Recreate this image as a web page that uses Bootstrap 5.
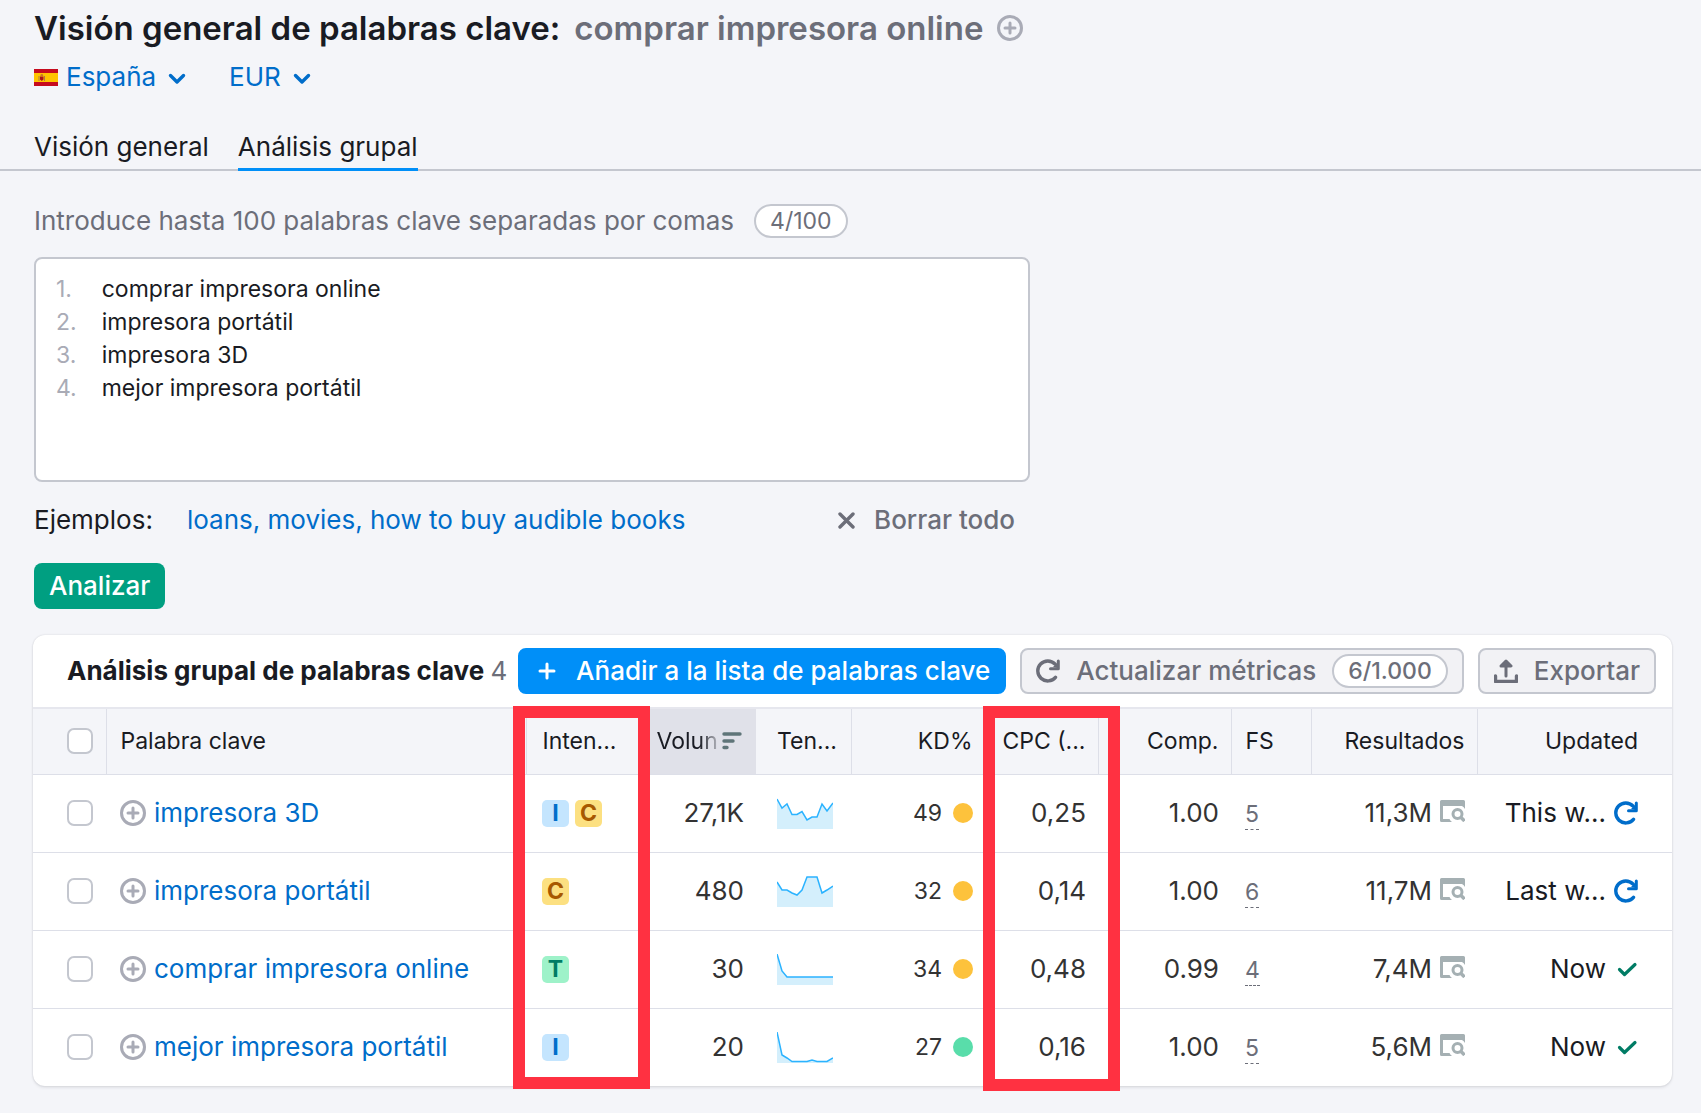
<!DOCTYPE html>
<html lang="es">
<head>
<meta charset="utf-8">
<meta name="viewport" content="width=device-width, initial-scale=1">
<title>Visión general de palabras clave</title>
<link href="https://cdn.jsdelivr.net/npm/bootstrap@5.3.0/dist/css/bootstrap.min.css" rel="stylesheet">
<style>
  :root { --ink:#191b23; --ink-soft:#6c6e79; --line:#c4c7cf; --rule:#dddfe8; --link:#006dca; --blue:#008ff8; --page:#f4f5f9; --alert:#ff3141; }
  body { font-family:Inter, "Liberation Sans", sans-serif; font-size:26px; line-height:32px; color:var(--ink); background:var(--page); padding-bottom:24px; }
  a { color:var(--link); text-decoration:none; }
  svg { display:block; flex:none; }
  .page-pad { padding-left:34px; padding-right:29px; }
  .page-title { font-size:33px; line-height:40px; font-weight:600; padding-top:8px; gap:14px; }
  .page-title .query { color:var(--ink-soft); }
  .plain-btn { background:none; border:0; padding:0; color:inherit; }
  .pickers { gap:43px; padding-top:13px; }
  .pickers .plain-btn { color:var(--link); gap:8px; }
  .tabs { gap:29px; margin-top:38px; border-bottom:2px solid var(--line); }
  .tabs a { color:var(--ink); padding-bottom:5px; margin-bottom:-2px; border-bottom:3px solid transparent; }
  .tabs a.active { border-color:var(--blue); }
  .hint { color:var(--ink-soft); gap:20px; margin-top:33px; }
  .counter { border:2px solid var(--line); border-radius:17px; background:#fff; color:var(--ink-soft); font-size:23px; line-height:30px; padding:0 14px; }
  .entry { max-width:996px; }
  .kw-box { border:2px solid var(--line); border-radius:8px; background:#fff; height:225px; margin-top:19px; padding:14px 20px; gap:25px; font-size:23px; line-height:33px; }
  .kw-box .line-nos { color:#a9abb6; }
  .kw-box textarea { border:0; padding:0; outline:0; resize:none; color:var(--ink); background:none; }
  .examples { margin-top:22px; padding-right:15px; }
  .examples a { margin-left:34px; }
  .clear-btn { color:var(--ink-soft); font-weight:500; gap:19px; }
  .btn-run { background:#009f81; color:#fff; font-size:26px; line-height:32px; font-weight:500; border:0; border-radius:8px; padding:7px 15px; margin-top:27px; }
  .report { background:#fff; border-radius:12px; box-shadow:0 0 2px rgba(25,27,35,.16), 0 2px 3px rgba(25,27,35,.08); margin:26px 0 0 -1px; }
  .report-head { height:72px; padding:0 16px 0 34px; }
  .report-head h2 { font-size:26px; line-height:32px; font-weight:700; margin:0; }
  .report-head .total { color:var(--ink-soft); font-weight:400; }
  .tool-set { gap:14px; }
  .tool-btn { height:46px; border-radius:8px; font-size:26px; line-height:32px; font-weight:500; border:2px solid var(--line); background:#f2f2f5; color:var(--ink-soft); padding:0 14px; gap:16px; white-space:nowrap; }
  .tool-btn.primary { background:var(--blue); border-color:var(--blue); color:#fff; }
  .kw-table { table-layout:fixed; width:100%; }
  .kw-table th { font-size:23px; font-weight:400; height:66px; background:var(--page); border-top:2px solid #e6e7ee; border-bottom:1px solid var(--rule); border-right:1px solid var(--rule); padding:0 12px 0 14px; white-space:nowrap; }
  .kw-table th:last-child { border-right:0; }
  .kw-table td { height:78px; border-bottom:1px solid var(--rule); padding:0 12px 0 14px; white-space:nowrap; color:#333; }
  .kw-table tr:last-child td { border-bottom:0; }
  .kw-table .pick { padding-left:34px; }
  .kw-table .aim { padding-left:16px; }
  .kw-table .trend { padding-left:21px; }
  .kw-table .last { padding-right:34px; color:var(--ink); }
  .kw-table .sorted { background:#e0e1e9; border-right:0; }
  .fade-text { -webkit-mask-image:linear-gradient(90deg,#000 70%,rgba(0,0,0,.2)); mask-image:linear-gradient(90deg,#000 70%,rgba(0,0,0,.2)); }
  .form-check-input.sq { display:block; width:26px; height:26px; margin:0; border:2px solid var(--line); border-radius:7px; background-color:#fff; }
  .intent { width:27px; height:27px; border-radius:5px; font-size:23px; line-height:27px; font-weight:700; text-align:center; }
  .intent.i { background:#c4e5fe; color:#006dca; }
  .intent.c { background:#fce081; color:#a75800; }
  .intent.t { background:#9ef2c9; color:#007c65; }
  .intents { gap:6px; }
  .kd { font-size:23px; gap:11px; }
  .kd-dot { width:20px; height:20px; border-radius:50%; background:#fdc23c; }
  .kd-dot.easy { background:#59ddaa; }
  .fs { font-size:23px; line-height:30px; color:var(--ink-soft); display:inline-block; border-bottom:1px dashed var(--ink-soft); }
  /* marker frames drawn over two columns */
  .frame { position:absolute; z-index:2; top:71px; width:137px; border:12px solid var(--alert); pointer-events:none; }
  .frame.one { right:1022px; bottom:-3px; }
  .frame.two { right:552px; bottom:-5px; }
</style>
<script src="https://cdn.jsdelivr.net/npm/bootstrap@5.3.0/dist/js/bootstrap.bundle.min.js"></script>
</head>
<body>
<svg width="0" height="0" class="position-absolute" aria-hidden="true">
  <symbol id="plus-circle" viewBox="0 0 26 26"><circle cx="13" cy="13" r="11.5" fill="none" stroke="#a9abb6" stroke-width="3"/><path d="M13 8v10M8 13h10" stroke="#a9abb6" stroke-width="3" stroke-linecap="round"/></symbol>
  <symbol id="chev" viewBox="0 0 18 12"><path d="M2.5 2.5 9 9l6.500-6.500" fill="none" stroke="currentColor" stroke-width="3.400" stroke-linecap="round" stroke-linejoin="round"/></symbol>
  <symbol id="reload" viewBox="0 0 24 24"><path d="M19.500 18.300A10 10 0 1 1 19 5" fill="none" stroke="currentColor" stroke-width="3.400" stroke-linecap="round"/><path d="M22.300 2v7.800h-7.800" fill="none" stroke="currentColor" stroke-width="3" stroke-linecap="round" stroke-linejoin="round"/><path d="m17 8 5-5v6z" fill="currentColor"/></symbol>
  <symbol id="tick" viewBox="0 0 24 24"><path d="m5.500 12.500 5 5L21 7.500" fill="none" stroke="#007c65" stroke-width="3.200" stroke-linecap="round" stroke-linejoin="round"/></symbol>
  <symbol id="serp" viewBox="0 0 25 22"><path d="M1.500 0h22A1.500 1.500 0 0 1 25 1.500V9a8 8 0 0 0-3-3H3v13h6.500a8 8 0 0 0 2.500 3H1.500A1.500 1.500 0 0 1 0 20.500v-19A1.500 1.500 0 0 1 1.500 0z" fill="#a5b0b3"/><circle cx="17.500" cy="14" r="4.500" fill="none" stroke="#a5b0b3" stroke-width="3"/><path d="m20.500 17 4 4" stroke="#a5b0b3" stroke-width="3.400"/></symbol>
</svg>

<header>
  <div class="page-pad">
    <h1 class="page-title d-flex align-items-center m-0"><span>Visión general de palabras clave:</span><span class="query">comprar impresora online</span>
      <button class="plain-btn" type="button" aria-label="Añadir"><svg width="26" height="26"><use href="#plus-circle"/></svg></button></h1>
    <div class="pickers d-flex">
      <button type="button" class="plain-btn d-flex align-items-center">
        <svg width="24" height="17" viewBox="0 0 24 17"><path fill="#c60b1e" d="M0 0h24v17H0z"/><path fill="#ffc400" d="M0 4h24v9H0z"/><path fill="#ad7a4a" d="M4.500 7h1v5h-1zM10 7h1v5h-1z"/><path fill="#ad1519" d="M6 7.500h3.500v3L7.800 12 6 10.500z"/><circle cx="7.800" cy="6.300" r="1.300" fill="#c8772b"/></svg>
        <span class="me-1">España</span><svg class="mt-1" width="18" height="12"><use href="#chev"/></svg></button>
      <button type="button" class="plain-btn d-flex align-items-center"><span class="me-1">EUR</span><svg class="mt-1" width="18" height="12"><use href="#chev"/></svg></button>
    </div>
  </div>
  <nav class="tabs page-pad d-flex"><a href="#">Visión general</a><a href="#" class="active" aria-current="page">Análisis grupal</a></nav>
</header>

<main class="page-pad">
  <section class="entry">
    <div class="hint d-flex align-items-center"><label for="kws">Introduce hasta 100 palabras clave separadas por comas</label><span class="counter">4/100</span></div>
    <div class="kw-box d-flex">
      <div class="line-nos" aria-hidden="true">1.<br>2.<br>3.<br>4.</div>
      <textarea id="kws" class="flex-grow-1" spellcheck="false">comprar impresora online
impresora portátil
impresora 3D
mejor impresora portátil</textarea>
    </div>
    <div class="examples d-flex align-items-center"><span>Ejemplos:</span><a href="#">loans, movies, how to buy audible books</a>
      <button type="button" class="plain-btn clear-btn d-flex align-items-center ms-auto"><svg width="17" height="17" viewBox="0 0 17 17"><path d="m2 2 13 13M15 2 2 15" stroke="currentColor" stroke-width="3.400" stroke-linecap="round"/></svg>Borrar todo</button></div>
    <button type="button" class="btn-run d-block">Analizar</button>
  </section>

  <section class="report position-relative">
    <div class="report-head d-flex align-items-center justify-content-between">
      <h2 class="text-nowrap">Análisis grupal de palabras clave <span class="total">4</span></h2>
      <div class="tool-set d-flex">
        <button type="button" class="tool-btn primary d-flex align-items-center"><svg class="ms-1 me-1" width="18" height="18" viewBox="0 0 18 18"><path d="M9 2v14M2 9h14" stroke="currentColor" stroke-width="3" stroke-linecap="round"/></svg>Añadir a la lista de palabras clave</button>
        <button type="button" class="tool-btn d-flex align-items-center"><svg width="24" height="24"><use href="#reload"/></svg>Actualizar métricas<span class="counter">6/1.000</span></button>
        <button type="button" class="tool-btn d-flex align-items-center"><svg width="24" height="24" viewBox="0 0 24 24"><path d="M1.500 17v5.500h21V17" fill="none" stroke="currentColor" stroke-width="3.400" stroke-linecap="round" stroke-linejoin="round"/><path d="M12 17V4M7 7l5-5 5 5z" fill="currentColor" stroke="currentColor" stroke-width="3" stroke-linecap="round" stroke-linejoin="round"/></svg>Exportar</button>
      </div>
    </div>
    <table class="kw-table">
      <colgroup><col style="width:73px"><col><col style="width:116px"><col style="width:114px"><col style="width:95px"><col style="width:134px"><col style="width:113px"><col style="width:133px"><col style="width:80px"><col style="width:166px"><col style="width:195px"></colgroup>
      <thead><tr>
        <th class="pick"><input type="checkbox" class="form-check-input sq" aria-label="Seleccionar todo"></th>
        <th>Palabra clave</th>
        <th class="aim">Inten...</th>
        <th class="sorted"><div class="d-flex align-items-center gap-1"><span class="fade-text">Volun</span><svg width="20" height="18" viewBox="0 0 20 18" stroke="#5f7579" stroke-width="3.400" stroke-linecap="round"><path d="M2 2h16M2 9h9M2 15.500h3"/></svg></div></th>
        <th class="trend">Ten...</th>
        <th class="text-end">KD%</th>
        <th class="text-end">CPC (...</th>
        <th class="text-end">Comp.</th>
        <th>FS</th>
        <th class="text-end">Resultados</th>
        <th class="text-end last">Updated</th>
      </tr></thead>
      <tbody>
      <tr>
        <td class="pick"><input type="checkbox" class="form-check-input sq" aria-label="impresora 3D"></td>
        <td><div class="d-flex align-items-center gap-2"><svg width="26" height="26"><use href="#plus-circle"/></svg><a href="#">impresora 3D</a></div></td>
        <td class="aim"><div class="intents d-flex"><span class="intent i">I</span><span class="intent c">C</span></div></td>
        <td class="text-end">27,1K</td>
        <td class="trend"><svg width="56" height="31"><path fill="#d4effc" d="M0 1 5 10l5-4 5 10.500h5l5-3 5 8.500 5-3h5L45 6l5 7 6-8v26H0z"/><path fill="none" stroke="#2bb3ff" stroke-width="1.500" d="m0 1 5 9 5-4 5 10.500h5l5-3 5 8.500 5-3h5L45 6l5 7 6-8"/></svg></td>
        <td><div class="kd d-flex align-items-center justify-content-end">49<span class="kd-dot"></span></div></td>
        <td class="text-end">0,25</td><td class="text-end">1.00</td><td><span class="fs">5</span></td>
        <td><div class="d-flex align-items-center justify-content-end gap-2">11,3M<svg class="mb-1" width="25" height="22"><use href="#serp"/></svg></div></td>
        <td class="last"><div class="d-flex align-items-center justify-content-end gap-2">This w...<svg width="24" height="24" color="#006dca"><use href="#reload"/></svg></div></td>
      </tr>
      <tr>
        <td class="pick"><input type="checkbox" class="form-check-input sq" aria-label="impresora portátil"></td>
        <td><div class="d-flex align-items-center gap-2"><svg width="26" height="26"><use href="#plus-circle"/></svg><a href="#">impresora portátil</a></div></td>
        <td class="aim"><div class="intents d-flex"><span class="intent c">C</span></div></td>
        <td class="text-end">480</td>
        <td class="trend"><svg width="56" height="31"><path fill="#d4effc" d="m0 6 5 8h5l5 3 5 2 5-5 5-13h10l5 16 5-3 6-4v21H0z"/><path fill="none" stroke="#2bb3ff" stroke-width="1.500" d="m0 6 5 8h5l5 3 5 2 5-5 5-13h10l5 16 5-3 6-4"/></svg></td>
        <td><div class="kd d-flex align-items-center justify-content-end">32<span class="kd-dot"></span></div></td>
        <td class="text-end">0,14</td><td class="text-end">1.00</td><td><span class="fs">6</span></td>
        <td><div class="d-flex align-items-center justify-content-end gap-2">11,7M<svg class="mb-1" width="25" height="22"><use href="#serp"/></svg></div></td>
        <td class="last"><div class="d-flex align-items-center justify-content-end gap-2">Last w...<svg width="24" height="24" color="#006dca"><use href="#reload"/></svg></div></td>
      </tr>
      <tr>
        <td class="pick"><input type="checkbox" class="form-check-input sq" aria-label="comprar impresora online"></td>
        <td><div class="d-flex align-items-center gap-2"><svg width="26" height="26"><use href="#plus-circle"/></svg><a href="#">comprar impresora online</a></div></td>
        <td class="aim"><div class="intents d-flex"><span class="intent t">T</span></div></td>
        <td class="text-end">30</td>
        <td class="trend"><svg width="56" height="31"><path fill="#d4effc" d="m0 0 5 17 5 6h46v8H0z"/><path fill="none" stroke="#2bb3ff" stroke-width="1.500" d="m0 0 5 17 5 6h46"/></svg></td>
        <td><div class="kd d-flex align-items-center justify-content-end">34<span class="kd-dot"></span></div></td>
        <td class="text-end">0,48</td><td class="text-end">0.99</td><td><span class="fs">4</span></td>
        <td><div class="d-flex align-items-center justify-content-end gap-2">7,4M<svg class="mb-1" width="25" height="22"><use href="#serp"/></svg></div></td>
        <td class="last"><div class="d-flex align-items-center justify-content-end gap-2">Now<svg width="24" height="24"><use href="#tick"/></svg></div></td>
      </tr>
      <tr>
        <td class="pick"><input type="checkbox" class="form-check-input sq" aria-label="mejor impresora portátil"></td>
        <td><div class="d-flex align-items-center gap-2"><svg width="26" height="26"><use href="#plus-circle"/></svg><a href="#">mejor impresora portátil</a></div></td>
        <td class="aim"><div class="intents d-flex"><span class="intent i">I</span></div></td>
        <td class="text-end">20</td>
        <td class="trend"><svg width="56" height="31"><path fill="#d4effc" d="m0 0 5 23 5 3 5 3.500h15l5-1.500 5 1.500h10l6-3.500v5H0z"/><path fill="none" stroke="#2bb3ff" stroke-width="1.500" d="m0 0 5 23 5 3 5 3.500h15l5-1.500 5 1.500h10l6-3.500"/></svg></td>
        <td><div class="kd d-flex align-items-center justify-content-end">27<span class="kd-dot easy"></span></div></td>
        <td class="text-end">0,16</td><td class="text-end">1.00</td><td><span class="fs">5</span></td>
        <td><div class="d-flex align-items-center justify-content-end gap-2">5,6M<svg class="mb-1" width="25" height="22"><use href="#serp"/></svg></div></td>
        <td class="last"><div class="d-flex align-items-center justify-content-end gap-2">Now<svg width="24" height="24"><use href="#tick"/></svg></div></td>
      </tr>
      </tbody>
    </table>
    <span class="frame one"></span>
    <span class="frame two"></span>
  </section>
</main>
</body>
</html>
